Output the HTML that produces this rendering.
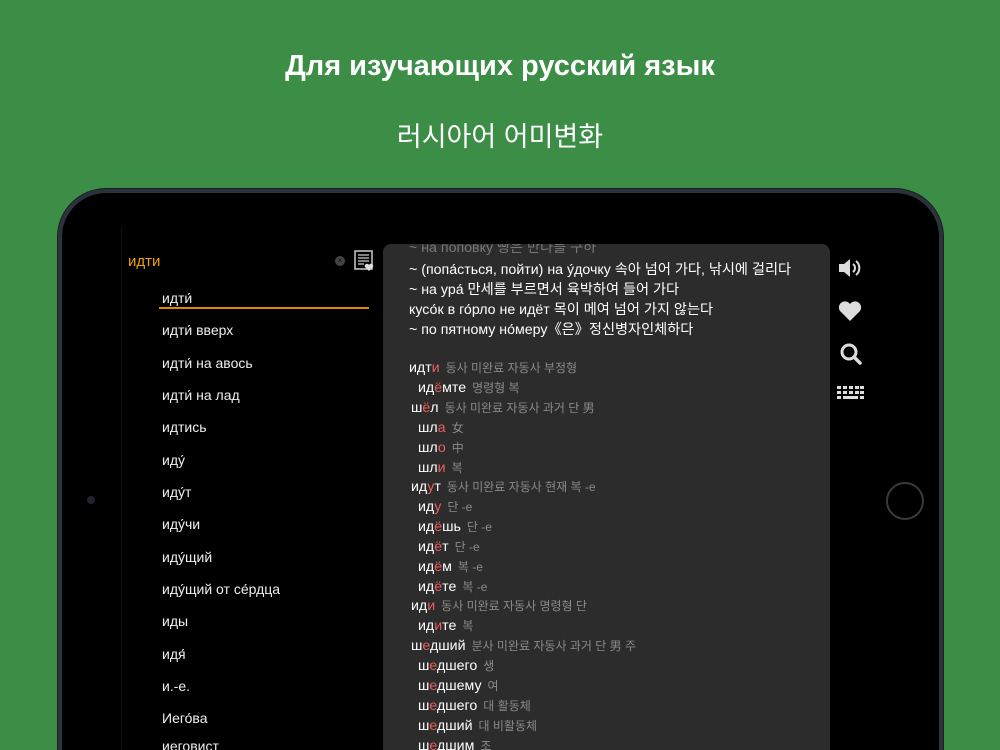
<!DOCTYPE html>
<html><head><meta charset="utf-8"><style>
*{margin:0;padding:0;box-sizing:border-box}
html,body{width:1000px;height:750px;overflow:hidden}
body{background:#3c8e47;font-family:"Liberation Sans","Noto Sans CJK KR",sans-serif;position:relative}
.t1{position:absolute;top:50px;width:1000px;text-align:center;color:#fff;font-size:29px;font-weight:bold}
.t2{position:absolute;top:115px;width:1000px;text-align:center;color:#fff;font-size:27px}
.dev{position:absolute;left:58px;top:189px;width:885px;height:561px;border-radius:48px 48px 0 0;background:#000;border:4px solid #2b323b;border-bottom:none;box-shadow:0 0 0 1px #1a1f24}
.a{position:absolute}
.li{position:absolute;left:162px;color:#eee;font-size:14px}
.panel{position:absolute;left:383px;top:244px;width:447px;height:506px;background:#2c2c2c;border-radius:8px 8px 0 0;overflow:hidden}
.p{position:absolute;color:#fff;font-size:14.2px;white-space:nowrap}
.g{color:#8a8a8a;font-size:12px;margin-left:6px}
.r{color:#e8605e}
</style></head><body>
<div class="t1">Для изучающих русский язык</div>
<div class="t2">러시아어 어미변화</div>
<div class="dev"></div>
<div class="a" style="left:121px;top:228px;width:1px;height:522px;background:#111"></div>
<div class="a" style="left:87px;top:496px;width:8px;height:8px;border-radius:50%;background:#223"></div>
<div class="a" style="left:886px;top:482px;width:38px;height:38px;border-radius:50%;border:2px solid #3a3a3a"></div>
<div class="a" style="left:128px;top:253px;color:#f0a000;font-size:15px">идти</div>
<div class="a" style="left:335px;top:256px;width:10px;height:10px;border-radius:50%;background:#444;color:#111;font-size:8px;line-height:10px;text-align:center">×</div>
<svg class="a" style="left:354px;top:250px" width="20" height="22" viewBox="0 0 20 22"><rect x="1" y="1" width="17" height="18" fill="none" stroke="#ccc" stroke-width="1.5"/><path d="M4 5h11M4 8h11M4 11h11M4 14h6" stroke="#ccc" stroke-width="1.3"/><path d="M15 21l-4-4a2 2 0 0 1 4-2a2 2 0 0 1 4 2z" fill="#ddd"/></svg>
<div class="li" style="top:290px">идти́</div>
<div class="a" style="left:159px;top:307px;width:210px;height:2px;background:#e08a00"></div>
<div class="li" style="top:322px">идти́ вверх</div>
<div class="li" style="top:355px">идти́ на авось</div>
<div class="li" style="top:387px">идти́ на лад</div>
<div class="li" style="top:419px">идтись</div>
<div class="li" style="top:452px">иду́</div>
<div class="li" style="top:484px">иду́т</div>
<div class="li" style="top:516px">иду́чи</div>
<div class="li" style="top:549px">иду́щий</div>
<div class="li" style="top:581px">иду́щий от се́рдца</div>
<div class="li" style="top:613px">иды</div>
<div class="li" style="top:646px">идя́</div>
<div class="li" style="top:678px">и.-е.</div>
<div class="li" style="top:710px">Иего́ва</div>
<div class="li" style="top:738px;height:12px;overflow:hidden">иеговист</div>
<div class="panel">
<div class="p" style="left:26px;top:-7px;color:#777">~ на поповку 빵은 만나를 구하</div>
<div class="p" style="left:26px;top:15px">~ (попа́сться, пойти) на у́дочку 속아 넘어 가다, 낚시에 걸리다</div>
<div class="p" style="left:26px;top:35px">~ на ура́ 만세를 부르면서 육박하여 들어 가다</div>
<div class="p" style="left:26px;top:55px">кусо́к в го́рло не идёт 목이 메여 넘어 가지 않는다</div>
<div class="p" style="left:26px;top:75px">~ по пятному но́меру《은》정신병자인체하다</div>
<div class="p" style="left:26px;top:115px">идт<span class="r">и</span><span class="g">동사 미완료 자동사 부정형</span></div>
<div class="p" style="left:35px;top:135px">ид<span class="r">ё</span>мте<span class="g">명령형 복</span></div>
<div class="p" style="left:28px;top:155px">ш<span class="r">ё</span>л<span class="g">동사 미완료 자동사 과거 단 男</span></div>
<div class="p" style="left:35px;top:175px">шл<span class="r">а</span><span class="g">女</span></div>
<div class="p" style="left:35px;top:195px">шл<span class="r">о</span><span class="g">中</span></div>
<div class="p" style="left:35px;top:215px">шл<span class="r">и</span><span class="g">복</span></div>
<div class="p" style="left:28px;top:234px">ид<span class="r">у</span>т<span class="g">동사 미완료 자동사 현재 복 -e</span></div>
<div class="p" style="left:35px;top:254px">ид<span class="r">у</span><span class="g">단 -e</span></div>
<div class="p" style="left:35px;top:274px">ид<span class="r">ё</span>шь<span class="g">단 -e</span></div>
<div class="p" style="left:35px;top:294px">ид<span class="r">ё</span>т<span class="g">단 -e</span></div>
<div class="p" style="left:35px;top:314px">ид<span class="r">ё</span>м<span class="g">복 -e</span></div>
<div class="p" style="left:35px;top:334px">ид<span class="r">ё</span>те<span class="g">복 -e</span></div>
<div class="p" style="left:28px;top:353px">ид<span class="r">и</span><span class="g">동사 미완료 자동사 명령형 단</span></div>
<div class="p" style="left:35px;top:373px">ид<span class="r">и</span>те<span class="g">복</span></div>
<div class="p" style="left:28px;top:393px">ш<span class="r">е</span>дший<span class="g">분사 미완료 자동사 과거 단 男 주</span></div>
<div class="p" style="left:35px;top:413px">ш<span class="r">е</span>дшего<span class="g">생</span></div>
<div class="p" style="left:35px;top:433px">ш<span class="r">е</span>дшему<span class="g">여</span></div>
<div class="p" style="left:35px;top:453px">ш<span class="r">е</span>дшего<span class="g">대 활동체</span></div>
<div class="p" style="left:35px;top:473px">ш<span class="r">е</span>дший<span class="g">대 비활동체</span></div>
<div class="p" style="left:35px;top:493px">ш<span class="r">е</span>дшим<span class="g">조</span></div>
</div>
<svg class="a" style="left:838px;top:257px" width="24" height="22" viewBox="0 0 24 22"><path d="M1 7h5l6-5v18l-6-5H1z" fill="#ddd"/><path d="M15 7a5 5 0 0 1 0 8M18 4a9 9 0 0 1 0 14" stroke="#ddd" stroke-width="2" fill="none"/></svg>
<svg class="a" style="left:838px;top:300px" width="24" height="22" viewBox="0 0 24 22"><path d="M12 21L2 11a5.5 5.5 0 0 1 10-7a5.5 5.5 0 0 1 10 7z" fill="#ddd"/></svg>
<svg class="a" style="left:839px;top:342px" width="24" height="24" viewBox="0 0 24 24"><circle cx="10" cy="10" r="7" stroke="#ddd" stroke-width="3" fill="none"/><path d="M15 15l6 6" stroke="#ddd" stroke-width="3.5" stroke-linecap="round"/></svg>
<svg class="a" style="left:837px;top:386px" width="27" height="16" viewBox="0 0 27 16"><g fill="#ddd"><rect x="0" y="0" width="4" height="3"/><rect x="6" y="0" width="4" height="3"/><rect x="12" y="0" width="4" height="3"/><rect x="18" y="0" width="4" height="3"/><rect x="23" y="0" width="4" height="3"/><rect x="0" y="5" width="4" height="3"/><rect x="6" y="5" width="4" height="3"/><rect x="12" y="5" width="4" height="3"/><rect x="18" y="5" width="4" height="3"/><rect x="23" y="5" width="4" height="3"/><rect x="0" y="10" width="4" height="3"/><rect x="6" y="10" width="15" height="3"/><rect x="23" y="10" width="4" height="3"/></g></svg>
</body></html>
